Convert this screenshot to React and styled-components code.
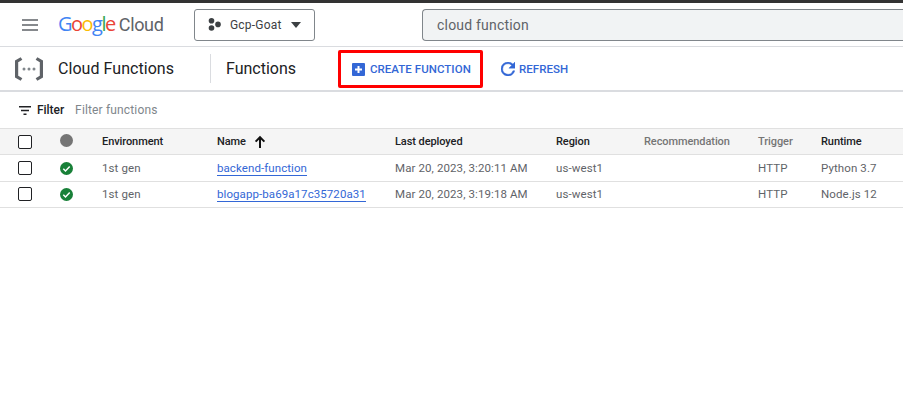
import React from "react";
import styled, { createGlobalStyle } from "styled-components";

const GlobalStyle = createGlobalStyle`
  html, body { margin: 0; padding: 0; background: #fff; }
  body { font-family: Roboto, "Liberation Sans", sans-serif; overflow: hidden; }
  * { box-sizing: border-box; }
`;

const Page = styled.div`
  width: 903px;
  height: 405px;
  overflow: hidden;
  border-top: 3px solid #333;
`;

const Header = styled.header`
  display: flex;
  align-items: center;
  height: 44px;
  border-bottom: 1px solid #dadce0;
  padding-left: 22px;
`;

const Burger = styled.svg`
  width: 16px;
  height: 12px;
  flex: none;
`;

const Logo = styled.div`
  display: flex;
  align-items: baseline;
  flex: none;
  margin-left: 20px;
  width: 136px;
  font-family: "Open Sans", sans-serif;
  font-size: 20px;
  letter-spacing: -1.5px;
  line-height: 26px;
`;

const Letter = styled.span`
  color: ${p => p.$color};
`;

const CloudWord = styled.span`
  color: #5f6368;
  margin-left: 4px;
  font-family: Roboto, sans-serif;
  font-size: 18px;
  letter-spacing: -0.35px;
`;

const ProjectButton = styled.div`
  display: flex;
  align-items: center;
  flex: none;
  width: 121px;
  height: 32px;
  border: 1px solid #80868b;
  border-radius: 3px;
  padding-left: 13px;
  color: #3c4043;
  font-size: 12px;
  letter-spacing: 0.2px;
`;

const ProjectName = styled.span`
  margin-left: 9px;
`;

const Caret = styled.span`
  width: 0;
  height: 0;
  margin-left: 9px;
  border-left: 5.5px solid transparent;
  border-right: 5.5px solid transparent;
  border-top: 6px solid #3c4043;
`;

const SearchBox = styled.div`
  display: flex;
  align-items: center;
  flex: none;
  width: 490px;
  height: 32px;
  margin-left: 107px;
  padding-left: 14px;
  background: #f1f3f4;
  border: 1px solid #80868b;
  border-right: 0;
  border-radius: 4px 0 0 4px;
  color: #5f6368;
  font-size: 14px;
  letter-spacing: 0.2px;
`;

const Toolbar = styled.div`
  display: flex;
  align-items: center;
  height: 45px;
  border-bottom: 2px solid #dadce0;
  padding-left: 14px;
`;

const ProductIcon = styled.svg`
  width: 29px;
  height: 26px;
  flex: none;
`;

const ProductName = styled.div`
  margin-left: 15px;
  width: 152px;
  font-size: 16px;
  letter-spacing: 0.05px;
  color: #202124;
`;

const ToolbarDivider = styled.div`
  width: 1px;
  height: 29px;
  background: #dadce0;
`;

const PageTitle = styled.div`
  margin-left: 15px;
  width: 112px;
  font-size: 16px;
  color: #202124;
`;

const HighlightBox = styled.div`
  display: flex;
  align-items: center;
  width: 145px;
  height: 38px;
  margin-top: 1px;
  border: 3px solid #f00;
  border-radius: 2px;
  padding-left: 11px;
`;

const ActionLabel = styled.span`
  margin-left: ${p => p.$gap}px;
  color: #3367d6;
  font-size: 11.5px;
  font-weight: 500;
  letter-spacing: 0.04px;
`;

const RefreshAction = styled.div`
  display: flex;
  align-items: center;
  margin-left: 18px;
`;

const FilterRow = styled.div`
  display: flex;
  align-items: center;
  height: 36px;
  padding-left: 19px;
`;

const FilterLabel = styled.span`
  margin-left: 6px;
  font-size: 12px;
  font-weight: 500;
  letter-spacing: -0.05px;
  color: #202124;
`;

const FilterHint = styled.span`
  margin-left: 11px;
  font-size: 12px;
  letter-spacing: 0.15px;
  color: #80868b;
`;

const Row = styled.div`
  display: grid;
  grid-template-columns: 42px 42px 115px 178px 161px 88px 114px 63px 1fr;
  align-items: center;
  height: 27px;
  padding-left: 18px;
  border-bottom: 1px solid #e0e0e0;
  font-size: 11.5px;
  letter-spacing: 0.1px;
  color: #5f6368;
  &:last-child {
    height: 26px;
    padding-bottom: 1px;
  }
`;

const HeadRow = styled(Row)`
  background: #f5f5f5;
  border-top: 1px solid #e0e0e0;
  font-size: 11px;
  font-weight: 500;
  letter-spacing: -0.08px;
  color: #202124;
`;

const Check = styled.span`
  display: block;
  width: 14px;
  height: 14px;
  border: 1.5px solid #202124;
  border-radius: 2px;
  background: #fff;
`;

const GreyDot = styled.span`
  display: block;
  width: 13px;
  height: 13px;
  border-radius: 50%;
  background: #757575;
  margin-bottom: 2px;
`;

const HeadCell = styled.span`
  display: flex;
  align-items: center;
  color: ${p => (p.$muted ? "#757575" : "inherit")};
`;

const SortArrow = styled.svg`
  width: 14px;
  height: 14px;
  margin-left: 7px;
  flex: none;
`;

const NameLink = styled.a`
  justify-self: start;
  color: #3367d6;
  border-bottom: 1px solid #3367d6;
  line-height: 14px;
  letter-spacing: 0.08px;
`;

const rows = [
  { name: "backend-function", date: "Mar 20, 2023, 3:20:11 AM", runtime: "Python 3.7" },
  { name: "blogapp-ba69a17c35720a31", date: "Mar 20, 2023, 3:19:18 AM", runtime: "Node.js 12" }
];

const OkIcon = () => (
  <svg width="13" height="13" viewBox="0 0 13 13">
    <circle cx="6.5" cy="6.5" r="6.5" fill="#188038" />
    <path d="M3.3 6.8l2.2 2.2 4.2-4.4" fill="none" stroke="#fff" strokeWidth="1.5" />
  </svg>
);

const App = () => (
  <Page>
    <GlobalStyle />
    <Header>
      <Burger viewBox="0 0 16 12">
        <path d="M0 1h16M0 6h16M0 11h16" stroke="#5f6368" strokeWidth="1.6" />
      </Burger>
      <Logo>
        <Letter $color="#4285f4">G</Letter>
        <Letter $color="#ea4335">o</Letter>
        <Letter $color="#fbbc04">o</Letter>
        <Letter $color="#4285f4">g</Letter>
        <Letter $color="#34a853">l</Letter>
        <Letter $color="#ea4335">e</Letter>
        <CloudWord>Cloud</CloudWord>
      </Logo>
      <ProjectButton>
        <svg width="13" height="13" viewBox="0 0 13 13">
          <circle cx="3.5" cy="2.8" r="2.8" fill="#3c4043" />
          <circle cx="3.5" cy="10" r="2.8" fill="#3c4043" />
          <circle cx="10" cy="6.4" r="2.8" fill="#3c4043" />
        </svg>
        <ProjectName>Gcp-Goat</ProjectName>
        <Caret />
      </ProjectButton>
      <SearchBox>cloud function</SearchBox>
    </Header>
    <Toolbar>
      <ProductIcon viewBox="0 0 29 26">
        <path d="M7.5 2.5L2.6 5.5v15l4.9 3" fill="none" stroke="#5f6368" strokeWidth="3.2" />
        <path d="M22.5 2.5l4.9 3v15l-4.9 3" fill="none" stroke="#5f6368" strokeWidth="3.2" />
        <circle cx="10" cy="13" r="1.5" fill="#80868b" />
        <circle cx="15" cy="13" r="1.5" fill="#80868b" />
        <circle cx="20" cy="13" r="1.5" fill="#80868b" />
      </ProductIcon>
      <ProductName>Cloud Functions</ProductName>
      <ToolbarDivider />
      <PageTitle>Functions</PageTitle>
      <HighlightBox>
        <svg width="13" height="13" viewBox="0 0 13 13">
          <rect width="13" height="13" rx="1" fill="#3367d6" />
          <path d="M6.5 3v7M3 6.5h7" stroke="#fff" strokeWidth="2" />
        </svg>
        <ActionLabel $gap={5}>CREATE FUNCTION</ActionLabel>
      </HighlightBox>
      <RefreshAction>
        <svg width="14" height="14" viewBox="4 4 16 16">
          <path
            d="M17.65 6.35A7.96 7.96 0 0 0 12 4a8 8 0 1 0 7.73 10h-2.08A6 6 0 1 1 12 6c1.66 0 3.14.69 4.22 1.78L13 11h7V4l-2.35 2.35z"
            fill="#3367d6"
            stroke="#3367d6"
            strokeWidth="0.5"
          />
        </svg>
        <ActionLabel $gap={4}>REFRESH</ActionLabel>
      </RefreshAction>
    </Toolbar>
    <FilterRow>
      <svg width="12" height="9" viewBox="0 0 12 9" style={{ flex: "none" }}>
        <path d="M0 .8h12M2 4.5h8M4.5 8.2h3" stroke="#202124" strokeWidth="1.5" />
      </svg>
      <FilterLabel>Filter</FilterLabel>
      <FilterHint>Filter functions</FilterHint>
    </FilterRow>
    <div>
      <HeadRow>
        <Check />
        <GreyDot />
        <HeadCell>Environment</HeadCell>
        <HeadCell>
          Name
          <SortArrow viewBox="0 0 14 14">
            <path d="M7 13V2.5M2.6 6.6L7 2.2l4.4 4.4" fill="none" stroke="#111" strokeWidth="2" />
          </SortArrow>
        </HeadCell>
        <HeadCell>Last deployed</HeadCell>
        <HeadCell>Region</HeadCell>
        <HeadCell $muted>Recommendation</HeadCell>
        <HeadCell $muted>Trigger</HeadCell>
        <HeadCell>Runtime</HeadCell>
      </HeadRow>
      {rows.map(row => (
        <Row key={row.name}>
          <Check />
          <OkIcon />
          <span>1st gen</span>
          <NameLink>{row.name}</NameLink>
          <span>{row.date}</span>
          <span>us-west1</span>
          <span />
          <span>HTTP</span>
          <span>{row.runtime}</span>
        </Row>
      ))}
    </div>
  </Page>
);

export default App;
